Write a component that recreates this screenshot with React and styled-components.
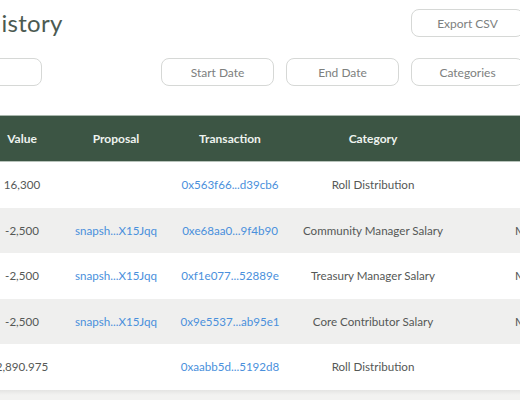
import React from "react";
import styled, { createGlobalStyle } from "styled-components";

const Global = createGlobalStyle`
  html, body { margin: 0; padding: 0; background: #ffffff; }
  body { font-family: "Lato", "Noto Sans", sans-serif; }
`;

const Viewport = styled.div`
  width: 520px;
  height: 400px;
  overflow: hidden;
  background: #ffffff;
`;

const Canvas = styled.div`
  width: 700px;
  margin-left: -160px;
`;

const TopBar = styled.div`
  display: flex;
  align-items: center;
  justify-content: space-between;
  padding: 9px 16px 0 143px;
  height: 28px;
`;

const Title = styled.h1`
  margin: 0;
  font-size: 24px;
  font-weight: 400;
  color: #4b5a51;
  letter-spacing: 0.3px;
  line-height: 28px;
`;

const OutlineButton = styled.button`
  box-sizing: border-box;
  width: 113px;
  height: 28px;
  border: 1px solid #d6d8d6;
  border-radius: 8px;
  background: #ffffff;
  color: #7d807e;
  font-family: "Lato", "Noto Sans", sans-serif;
  font-size: 12px;
  padding: 0;
`;

const FilterRow = styled.div`
  display: flex;
  align-items: center;
  gap: 12px;
  margin-top: 21px;
  padding-left: 40px;
  height: 28px;
`;

const SearchInput = styled.input`
  box-sizing: border-box;
  width: 162px;
  height: 28px;
  border: 1px solid #d6d8d6;
  border-radius: 8px;
  margin-right: 107px;
  background: #ffffff;
  outline: none;
`;

const Table = styled.div`
  margin-top: 29px;
  margin-left: 136px;
  width: 700px;
`;

const cols = "92px 96px 132px 154px 220px";

const HeadRow = styled.div`
  display: grid;
  grid-template-columns: ${cols};
  height: 45px;
  background: #3c5544;
  border-top: 1px solid #a9b7ad;
  border-bottom: 1px solid #b8c3bb;
`;

const HeadCell = styled.div`
  display: flex;
  align-items: center;
  justify-content: center;
  color: #eef3ef;
  font-size: 12px;
  font-weight: 700;
`;

const Row = styled.div`
  display: grid;
  grid-template-columns: ${cols};
  height: 45.5px;
  background: ${(p) => (p.$alt ? "#efefee" : "#ffffff")};
`;

const FadeRow = styled(Row)`
  background: linear-gradient(#e4e4e3, #f2f2f1 5px);
`;

const Cell = styled.div`
  display: flex;
  align-items: center;
  justify-content: center;
  white-space: nowrap;
  font-size: 11.6px;
  color: ${(p) => (p.$link ? "#4a90dc" : "#555856")};
`;

const rows = [
  { value: "16,300", proposal: "", tx: "0x563f66...d39cb6", cat: "Roll Distribution", note: "" },
  { value: "-2,500", proposal: "snapsh...X15Jqq", tx: "0xe68aa0...9f4b90", cat: "Community Manager Salary", note: "Monthly payment" },
  { value: "-2,500", proposal: "snapsh...X15Jqq", tx: "0xf1e077...52889e", cat: "Treasury Manager Salary", note: "Monthly payment" },
  { value: "-2,500", proposal: "snapsh...X15Jqq", tx: "0x9e5537...ab95e1", cat: "Core Contributor Salary", note: "Monthly payment" },
  { value: "2,890.975", proposal: "", tx: "0xaabb5d...5192d8", cat: "Roll Distribution", note: "" },
];

export default function App() {
  return (
    <Viewport>
      <Global />
      <Canvas>
        <TopBar>
          <Title>History</Title>
          <OutlineButton>Export CSV</OutlineButton>
        </TopBar>
        <FilterRow>
          <SearchInput />
          <OutlineButton>Start Date</OutlineButton>
          <OutlineButton>End Date</OutlineButton>
          <OutlineButton>Categories</OutlineButton>
        </FilterRow>
        <Table>
          <HeadRow>
            <HeadCell>Value</HeadCell>
            <HeadCell>Proposal</HeadCell>
            <HeadCell>Transaction</HeadCell>
            <HeadCell>Category</HeadCell>
            <HeadCell>Note</HeadCell>
          </HeadRow>
          {rows.map((r, i) => (
            <Row key={i} $alt={i % 2 === 1}>
              <Cell>{r.value}</Cell>
              <Cell $link>{r.proposal}</Cell>
              <Cell $link>{r.tx}</Cell>
              <Cell>{r.cat}</Cell>
              <Cell>{r.note}</Cell>
            </Row>
          ))}
          <FadeRow>
            <Cell />
          </FadeRow>
        </Table>
      </Canvas>
    </Viewport>
  );
}
